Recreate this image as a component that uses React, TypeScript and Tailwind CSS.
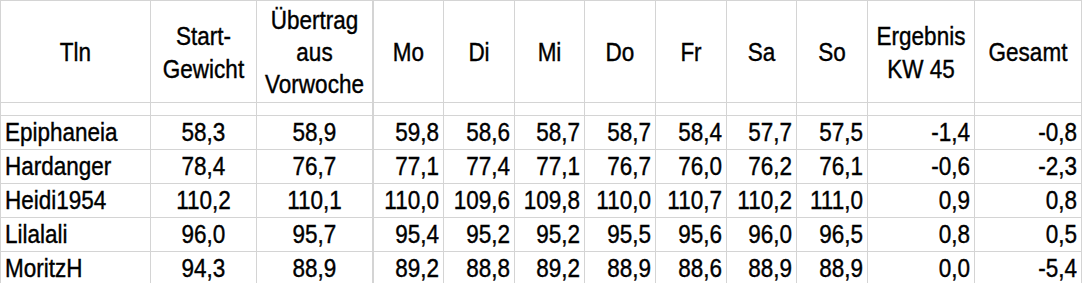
import React from "react";

const headers: string[][] = [
  ["Tln"],
  ["Start-", "Gewicht"],
  ["Übertrag", "aus", "Vorwoche"],
  ["Mo"],
  ["Di"],
  ["Mi"],
  ["Do"],
  ["Fr"],
  ["Sa"],
  ["So"],
  ["Ergebnis", "KW 45"],
  ["Gesamt"],
];

const rows: string[][] = [
  ["Epiphaneia", "58,3", "58,9", "59,8", "58,6", "58,7", "58,7", "58,4", "57,7", "57,5", "-1,4", "-0,8"],
  ["Hardanger", "78,4", "76,7", "77,1", "77,4", "77,1", "76,7", "76,0", "76,2", "76,1", "-0,6", "-2,3"],
  ["Heidi1954", "110,2", "110,1", "110,0", "109,6", "109,8", "110,0", "110,7", "110,2", "111,0", "0,9", "0,8"],
  ["Lilalali", "96,0", "95,7", "95,4", "95,2", "95,2", "95,5", "95,6", "96,0", "96,5", "0,8", "0,5"],
  ["MoritzH", "94,3", "88,9", "89,2", "88,8", "89,2", "88,9", "88,6", "88,9", "88,9", "0,0", "-5,4"],
];

const cellBase = "border-b border-[#d4d4d4] flex items-center";

function borderR(i: number) {
  return i === 2 ? "border-r-2 border-r-[#d4d4d4]" : "border-r border-r-[#d4d4d4]";
}

function align(i: number) {
  if (i === 0) return "justify-start pl-[4px]";
  if (i === 1 || i === 2) return "justify-center";
  return "justify-end pr-[4px]";
}

export default function App() {
  return (
    <div className="h-[283px] w-[1082px] overflow-hidden bg-white">
      <div
        className="grid border-l border-t border-[#d4d4d4] text-black text-[22.5px] leading-[27.5px] [-webkit-text-stroke:0.35px_#000]"
        style={{ fontFamily: '"Liberation Sans", Arial, sans-serif' }}
      >
        <div className="grid grid-cols-[150px_106px_117px_70px_71px_70px_71px_71px_70px_71px_107px_107px] grid-rows-[102px_13px_34px_34px_34px_34px_34px]">
          {headers.map((h, i) => (
            <div
              key={"h" + i}
              className={`${cellBase} ${borderR(i)} justify-center pt-[2px] text-center`}
            >
              <span className="inline-block scale-y-[1.17]">
                {h.map((l, j) => (
                  <div key={j}>{l}</div>
                ))}
              </span>
            </div>
          ))}
          {headers.map((_, i) => (
            <div key={"b" + i} className={`${cellBase} ${borderR(i)}`} />
          ))}
          {rows.map((r, ri) =>
            r.map((c, i) => (
              <div
                key={ri + "-" + i}
                className={`${cellBase} ${borderR(i)} ${align(i)} whitespace-nowrap`}
              >
                <span className="inline-block scale-y-[1.17]">{c}</span>
              </div>
            ))
          )}
        </div>
      </div>
    </div>
  );
}
